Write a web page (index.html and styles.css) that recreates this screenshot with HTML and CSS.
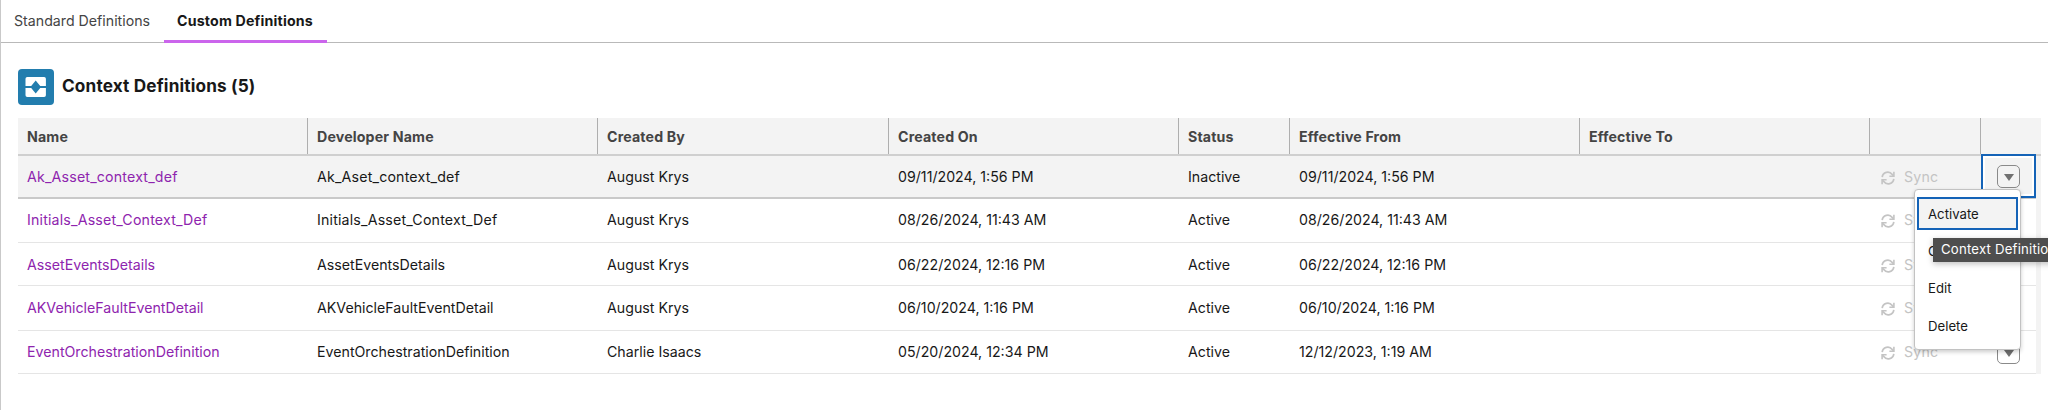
FILE: index.html
```
<!DOCTYPE html>
<html lang="en">
<head>
<meta charset="utf-8">
<title>Context Definitions</title>
<link rel="stylesheet" href="styles.css">
</head>
<body>
<svg width="0" height="0" class="defs">
  <symbol id="sync" viewBox="0 0 14 14">
    <path d="M1.2 6.2A5.6 5.6 0 0 1 11.2 3.4L12.6 4.8M12.8 7.8A5.6 5.6 0 0 1 2.8 10.6L1.4 9.2" fill="none" stroke="currentColor" stroke-width="1.7"/>
    <path d="M12.9.8V5.3H8.4M1.1 13.2V8.7H5.6" fill="none" stroke="currentColor" stroke-width="1.6"/>
  </symbol>
</svg>
<main class="page">
  <nav class="tabs">
    <a class="tab">Standard Definitions</a>
    <a class="tab tab-active">Custom Definitions</a>
  </nav>
  <header class="heading">
    <svg class="logo" viewBox="0 0 36 36">
      <rect width="36" height="36" rx="4" fill="#227dae"/>
      <path d="M9.3 8H26.1A1.8 1.8 0 0 1 27.9 9.8V17H22.2L17.7 11.4L13.2 17H7.5V9.8A1.8 1.8 0 0 1 9.3 8ZM7.5 19H13.2L17.7 24.6L22.2 19H27.9V26.2A1.8 1.8 0 0 1 26.1 28H9.3A1.8 1.8 0 0 1 7.5 26.2Z" fill="#fff"/>
    </svg>
    <h1 class="title">Context Definitions (5)</h1>
  </header>
  <section class="table">
    <div class="row row-head">
      <div class="cell">Name</div><div class="cell">Developer Name</div><div class="cell">Created By</div><div class="cell">Created On</div><div class="cell">Status</div><div class="cell">Effective From</div><div class="cell">Effective To</div><div class="cell"></div><div class="cell"></div>
    </div>
    <div class="body">
      <div class="row row-current">
        <div class="cell link wide">Ak_Asset_context_def</div><div class="cell wide">Ak_Aset_context_def</div><div class="cell">August Krys</div><div class="cell">09/11/2024, 1:56 PM</div><div class="cell">Inactive</div><div class="cell">09/11/2024, 1:56 PM</div><div class="cell"></div><div class="cell sync"><svg class="icon"><use href="#sync"/></svg>Sync</div>
        <div class="cell action focused"><button class="menu-button"></button>
          <div class="menu">
            <div class="item item-focused">Activate</div><div class="item">Clone</div><div class="item">Edit</div><div class="item">Delete</div>
            <div class="tooltip">Context Definition</div>
          </div>
        </div>
      </div>
      <div class="row row-a">
        <div class="cell link wide">Initials_Asset_Context_Def</div><div class="cell wide">Initials_Asset_Context_Def</div><div class="cell">August Krys</div><div class="cell">08/26/2024, 11:43 AM</div><div class="cell">Active</div><div class="cell">08/26/2024, 11:43 AM</div><div class="cell"></div><div class="cell sync"><svg class="icon"><use href="#sync"/></svg>Sync</div><div class="cell action"><button class="menu-button"></button></div>
      </div>
      <div class="row row-b">
        <div class="cell link">AssetEventsDetails</div><div class="cell">AssetEventsDetails</div><div class="cell">August Krys</div><div class="cell">06/22/2024, 12:16 PM</div><div class="cell">Active</div><div class="cell">06/22/2024, 12:16 PM</div><div class="cell"></div><div class="cell sync"><svg class="icon"><use href="#sync"/></svg>Sync</div><div class="cell action"><button class="menu-button"></button></div>
      </div>
      <div class="row row-c">
        <div class="cell link">AKVehicleFaultEventDetail</div><div class="cell">AKVehicleFaultEventDetail</div><div class="cell">August Krys</div><div class="cell">06/10/2024, 1:16 PM</div><div class="cell">Active</div><div class="cell">06/10/2024, 1:16 PM</div><div class="cell"></div><div class="cell sync"><svg class="icon"><use href="#sync"/></svg>Sync</div><div class="cell action"><button class="menu-button"></button></div>
      </div>
      <div class="row row-d">
        <div class="cell link">EventOrchestrationDefinition</div><div class="cell">EventOrchestrationDefinition</div><div class="cell">Charlie Isaacs</div><div class="cell">05/20/2024, 12:34 PM</div><div class="cell">Active</div><div class="cell">12/12/2023, 1:19 AM</div><div class="cell"></div><div class="cell sync"><svg class="icon"><use href="#sync"/></svg>Sync</div><div class="cell action"><button class="menu-button"></button></div>
      </div>
    </div>
  </section>
</main>
</body>
</html>
```
FILE: styles.css
```
* { box-sizing: border-box; }
body {
  margin: 0;
  background: #fff;
  color: #181818;
  font: 14.2px/20px Inter, "Liberation Sans", sans-serif;
  overflow: hidden;
}
.defs { display: block; }
.page { height: 410px; border-left: 1px solid #c9c9c9; }
.tabs { display: flex; height: 43px; border-bottom: 1px solid #b9b9b9; }
.tab { height: 43px; padding: 11px 13px 0; color: #444; white-space: nowrap; }
.tab:first-child { width: 163px; }
.tab-active {
  width: 163px;
  border-bottom: 3px solid #cb65ec;
  color: #181818;
  font-weight: 700;
  letter-spacing: .17px;
}
.heading { display: flex; gap: 8px; padding: 26px 0 0 17px; height: 75px; }
.logo { width: 36px; height: 36px; }
.title { margin: 5px 0 0; font-size: 17.2px; line-height: 24px; font-weight: 700; letter-spacing: .15px; }
.table { width: 2023px; margin-left: 17px; }
.row {
  display: grid;
  grid-template-columns: 290px 290px 291px 290px 111px 290px 290px 111px 1fr;
}
.cell { display: flex; align-items: center; padding-left: 9px; white-space: nowrap; }
.row-head {
  height: 38px;
  background: #f3f3f3;
  border-bottom: 2px solid #cfcfcf;
  color: #444;
  font-weight: 700;
  letter-spacing: .15px;
}
.row-head .cell { border-right: 1px solid #aeaeae; padding-top: 1px; }
.row-head .cell:last-child { border-right: 0; }
.body { border-right: 5px solid #f3f3f3; }
.row-current { height: 43px; background: #f3f3f3; border-bottom: 2px solid #c9c9c9; }
.row-a { height: 44px; border-bottom: 1px solid #e5e5e5; }
.row-a .cell { padding-bottom: 1px; }
.row-b { height: 43px; border-bottom: 1px solid #e5e5e5; }
.row-b .cell { padding-top: 1px; }
.row-c { height: 45px; border-bottom: 1px solid #e5e5e5; }
.row-d { height: 43px; border-bottom: 1px solid #e5e5e5; }
.wide { letter-spacing: .18px; }
.link { color: #8e24ae; }
.sync { padding-left: 11px; gap: 9px; color: #c4c4c4; letter-spacing: .15px; }
.icon { width: 14px; height: 14px; margin-top: 2px; }
.action { position: relative; padding-left: 16px; }
.focused {
  margin: -2px 0 -1px;
  padding-left: 14px;
  border: 2px solid #1463b7;
  box-shadow: inset 0 0 0 2px #fff;
}
.menu-button {
  width: 23px;
  height: 23px;
  padding: 0;
  border: 1px solid #8a8a8a;
  border-radius: 5px;
  background: transparent;
  display: grid;
  place-items: center;
}
.menu-button::after {
  content: "";
  margin-top: 2px;
  border: 5px solid transparent;
  border-top: 7px solid #707070;
  border-bottom: 0;
}
.menu {
  position: absolute;
  z-index: 2;
  left: -69px;
  top: 33px;
  width: 107px;
  height: 161px;
  padding: 7px 2px 5px;
  border: 1px solid #c2c2c2;
  border-radius: 4px;
  background: #fff;
  box-shadow: 0 2px 4px rgba(0, 0, 0, .2);
  font-size: 13.2px;
}
.item { height: 37.5px; padding: 8px 11px; }
.item-focused {
  width: 101px;
  height: 33px;
  padding: 5px 9px;
  margin: 0 0 2.5px;
  border: 2px solid #1463b7;
  background: #f3f3f3;
}
.tooltip {
  position: absolute;
  left: 18px;
  top: 48px;
  height: 24px;
  padding: 1px 8px;
  width: 140px;
  background: #4e4e4e;
  color: #fff;
  white-space: nowrap;
  letter-spacing: .2px;
  box-shadow: 0 2px 6px rgba(0, 0, 0, .25);
}
```
